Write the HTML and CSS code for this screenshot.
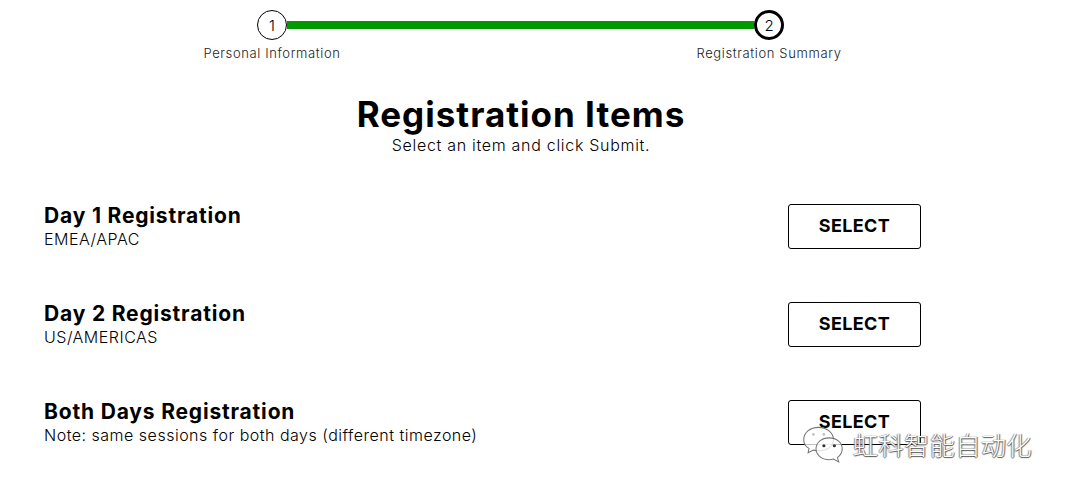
FILE: index.html
```html
<!DOCTYPE html>
<html lang="en">

<head>
	<meta charset="UTF-8">
	<title>Registration Items</title>
	<link rel="stylesheet" href="styles.css">
</head>

<body>
	<div class="stepper">
		<div class="track">
			<span class="dot">1</span>
			<span class="line"></span>
			<span class="dot current">2</span>
		</div>
		<div class="labels">
			<span>Personal Information</span>
			<span>Registration Summary</span>
		</div>
	</div>

	<div class="intro">
		<h1>Registration Items</h1>
		<p>Select an item and click Submit.</p>
	</div>

	<div class="items">
		<div class="item">
			<div class="info">
				<h2>Day 1 Registration</h2>
				<p>EMEA/APAC</p>
			</div>
			<button>SELECT</button>
		</div>
		<div class="item">
			<div class="info">
				<h2>Day 2 Registration</h2>
				<p>US/AMERICAS</p>
			</div>
			<button>SELECT</button>
		</div>
		<div class="item">
			<div class="info">
				<h2>Both Days Registration</h2>
				<p>Note: same sessions for both days (different timezone)</p>
			</div>
			<button>SELECT</button>
		</div>
	</div>

	<div class="mark">
		<svg width="42" height="38" viewBox="0 0 48 42" fill="#fff" fill-opacity=".75" stroke="#777" stroke-width="1.2">
			<path d="M19 2C9 2 2 8 2 16c0 4 2 8 6 10l-1 5 6-3c2 .5 4 .8 6 .8C29 29 36 23 36 16S29 2 19 2z" />
			<path d="M31 14c-9 0-15 6-15 12.500S22 39 31 39c2 0 3-.2 5-.8l6 3.300-1.500-5C44 34 46 30.500 46 26.500 46 20 40 14 31 14z" />
			<circle cx="13" cy="10" r="1.500" fill="#aaa" stroke="none" />
			<circle cx="25" cy="10" r="1.500" fill="#aaa" stroke="none" />
			<circle cx="25" cy="23" r="1.800" fill="#333" fill-opacity="1" stroke="none" />
			<circle cx="37" cy="23" r="1.800" fill="#333" fill-opacity="1" stroke="none" />
		</svg>
		<span>虹科智能自动化</span>
	</div>
</body>

</html>
```

FILE: styles.css
```css
body {
	margin: 0;
	padding: 0;
	background-color: white;
	color: #000;
	font-family: Inter, "Liberation Sans", sans-serif;
	overflow: hidden;
	position: relative;
	height: 492px;
}

.stepper {
	width: 697px;
	margin-left: 172px;
	padding-top: 10px;
}

.track {
	display: flex;
	align-items: center;
	padding: 0 85px;
}

.dot {
	width: 30px;
	height: 30px;
	box-sizing: border-box;
	border: 1px solid #000;
	border-radius: 50%;
	display: flex;
	align-items: center;
	justify-content: center;
	font-size: 15px;
	font-weight: 300;
}

.dot.current {
	border: 3px solid #000;
}

.line {
	flex: 1;
	height: 8px;
	background-color: #090;
}

.labels {
	display: flex;
	justify-content: space-between;
	margin-top: 5px;
	font-size: 13px;
	line-height: 16px;
	letter-spacing: .62px;
	font-weight: 300;
	color: #222;
}

.labels span {
	width: 200px;
	text-align: center;
}

.intro {
	width: 1042px;
	margin-top: 33px;
	text-align: center;
}

.intro h1 {
	margin: 0;
	font-size: 35px;
	line-height: 40px;
	font-weight: 700;
	letter-spacing: 1px;
}

.intro p {
	margin: 0;
	font-size: 16px;
	line-height: 22px;
	font-weight: 300;
	letter-spacing: .7px;
}

.items {
	width: 877px;
	margin-left: 44px;
	margin-top: 21px;
}

.item {
	display: flex;
	justify-content: space-between;
	align-items: center;
	height: 98px;
}

.info {
	padding-top: 1px;
}

.item h2 {
	margin: 0;
	font-size: 21px;
	line-height: 24px;
	font-weight: 700;
	letter-spacing: .82px;
}

.item p {
	margin: 0;
	font-size: 16px;
	line-height: 22px;
	font-weight: 300;
	letter-spacing: .5px;
}

button {
	width: 133px;
	height: 45px;
	padding: 0 0 2px;
	background: #fff;
	border: 1px solid #000;
	border-radius: 3px;
	font-family: inherit;
	font-size: 18px;
	font-weight: 700;
	letter-spacing: .35px;
	color: #000;
}

.mark {
	position: absolute;
	left: 802px;
	top: 424px;
	display: flex;
	align-items: center;
	gap: 9px;
}

.mark span {
	font-family: "Noto Sans CJK SC", sans-serif;
	font-size: 25px;
	line-height: 40px;
	letter-spacing: .6px;
	font-weight: 300;
	color: #fff;
	text-shadow: 1px 0 1px #555, 0 1px 1px #555, -1px 0 1px #999;
}
```
